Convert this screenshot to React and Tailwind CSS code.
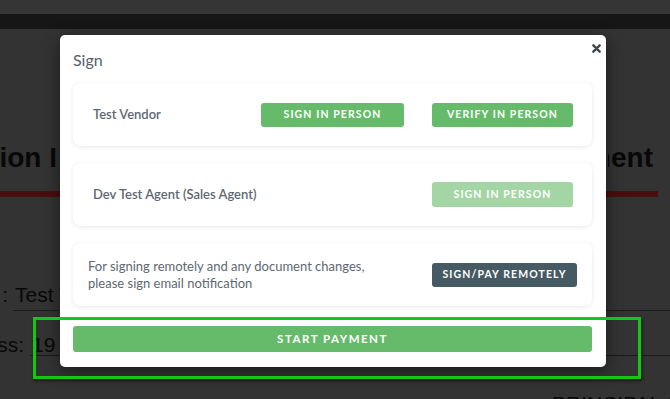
import React from 'react';

function CloseIcon() {
  return (
    <svg width="9" height="9" viewBox="0 0 10 10" className="block">
      <path d="M1.5 1.5 L8.5 8.5 M8.5 1.5 L1.5 8.5" stroke="#3a4650" strokeWidth="2.6" strokeLinecap="round" />
    </svg>
  );
}

function Btn({ children, className }) {
  return (
    <button
      className={
        'h-[24px] rounded-[3px] text-white font-bold uppercase tracking-[1.1px] text-[10.5px] flex items-center justify-center ' +
        className
      }
    >
      {children}
    </button>
  );
}

function Card({ children, className }) {
  return (
    <div className={'h-[63px] bg-white rounded-[7px] shadow-[0_1px_5px_rgba(0,0,0,0.09)] flex items-center ' + className}>
      {children}
    </div>
  );
}

function SignModal() {
  return (
    <div
      className="absolute left-[60px] top-[35px] w-[546px] bg-white rounded-[5px] shadow-[0_4px_16px_rgba(0,0,0,0.5)] pl-[13px] pr-[14px] pt-[15px] pb-[15px]"
      style={{ fontFamily: 'Lato, "Open Sans", sans-serif' }}
    >
      <button className="absolute right-[5px] top-[9px]">
        <CloseIcon />
      </button>
      <h2 className="text-[16px] leading-[20px] text-[#55616b]">Sign</h2>

      <div className="mt-[13px] flex flex-col gap-[17px]">
        {/* vendor */}
        <Card className="pl-[20px] pr-[19px] justify-between">
          <span className="text-[13px] font-semibold text-[#5d6872]">Test Vendor</span>
          <div className="flex gap-[28px]">
            <Btn className="w-[143px] bg-[#66bb6a]">Sign in person</Btn>
            <Btn className="w-[141px] bg-[#66bb6a]">Verify in person</Btn>
          </div>
        </Card>

        {/* agent */}
        <Card className="pl-[20px] pr-[19px] justify-between">
          <span className="text-[13px] font-semibold text-[#5d6872]">Dev Test Agent (Sales Agent)</span>
          <Btn className="w-[141px] h-[25px] bg-[#a3d5a5]">Sign in person</Btn>
        </Card>

        {/* remote */}
        <Card className="pl-[15px] pr-[15px] justify-between">
          <p className="text-[13px] leading-[17px] text-[#5d6872]">
            For signing remotely and any document changes,
            <br />
            please sign email notification
          </p>
          <Btn className="w-[145px] bg-[#465a64]">Sign/pay remotely</Btn>
        </Card>
      </div>

      <button className="mt-[20px] w-full h-[26px] rounded-[3px] bg-[#66bb6a] text-white font-bold uppercase text-[11.5px] tracking-[1.5px] flex items-center justify-center">
        Start payment
      </button>
    </div>
  );
}

export default function App() {
  return (
    <div
      className="relative w-[670px] h-[399px] overflow-hidden bg-[#333333] text-[#080808]"
      style={{ fontFamily: '"Liberation Sans", Arial, sans-serif' }}
    >
      {/* dimmed page behind the modal */}
      <div className="h-[14px] bg-[#353535]" />
      <div className="h-[15px] bg-[#161616]" />

      <div className="mt-[115px] h-[28px] flex text-[28px] leading-[28px] font-bold whitespace-nowrap">
        <div className="w-[57px] flex justify-end overflow-hidden">
          <span>Commission I</span>
        </div>
        <div className="ml-auto mr-[17px] w-[45px] flex justify-end overflow-hidden">
          <span>Agreement</span>
        </div>
      </div>
      <div className="mt-[19px] h-[6px] w-[658px] bg-[#4a0d0d]" />

      <div className="mt-[86px] flex text-[21px] leading-[24px] whitespace-nowrap">
        <div className="w-[8px] flex justify-end overflow-hidden">
          <span>Name&nbsp;&nbsp;:</span>
        </div>
        <div className="ml-[5px] flex-1 h-[28px] pl-[2px] border-b border-[#1a1a1a]">Test Vendor</div>
      </div>

      <div className="mt-[24px] flex text-[21px] leading-[20px] whitespace-nowrap">
        <div className="w-[24px] flex justify-end overflow-hidden">
          <span>Address:</span>
        </div>
        <div className="ml-[6px] flex-1 h-[21px] pl-[2px] border-b border-[#1a1a1a]">19 Industrial Way</div>
      </div>

      <div className="mt-[36px] pl-[552px] text-[21px] leading-[24px] whitespace-nowrap">PRINCIPAL OFFICE</div>

      <SignModal />

      {/* highlight annotation */}
      <div className="pointer-events-none absolute left-[33px] top-[317px] w-[608px] h-[62px] border-[3px] border-[#14c714] shadow-[1px_2px_3px_rgba(0,0,0,0.5)]" />
    </div>
  );
}
